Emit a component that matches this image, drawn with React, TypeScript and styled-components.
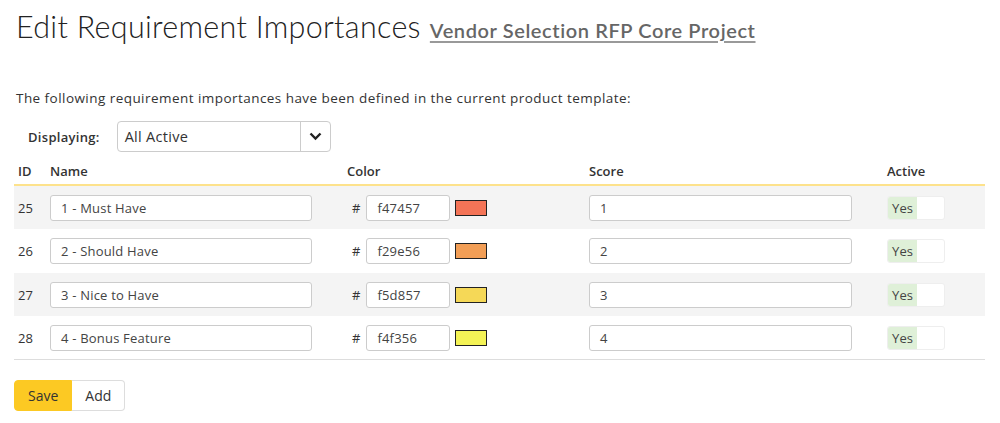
import React from "react";
import styled, { createGlobalStyle } from "styled-components";

const Global = createGlobalStyle`
  html, body { margin: 0; padding: 0; background: #fff; }
  body { font-family: "Open Sans", "Noto Sans", sans-serif; color: #333; }
  * { box-sizing: border-box; }
`;

const Page = styled.div`
  padding: 0 15px 0 14px;
  width: 1000px;
`;

const TitleRow = styled.div`
  display: flex;
  align-items: baseline;
  gap: 9px;
  padding: 8px 0 0 2px;
  height: 56px;
`;

const Title = styled.h1`
  margin: 0;
  font-family: "Lato", sans-serif;
  font-weight: 300;
  font-size: 30.5px;
  color: #222;
  letter-spacing: 0.3px;
`;

const ProjectLink = styled.a`
  font-family: "Lato", sans-serif;
  font-weight: 600;
  font-size: 20px;
  color: #666;
  text-decoration: underline;
  text-decoration-color: #999;
  text-underline-offset: 3px;
  letter-spacing: 0.6px;
`;

const Intro = styled.p`
  margin: 33px 0 0 2px;
  font-size: 13.5px;
  line-height: 18px;
  letter-spacing: 0.45px;
`;

const FilterRow = styled.div`
  display: flex;
  align-items: center;
  gap: 17px;
  margin: 14px 0 0 14px;
`;

const FilterLabel = styled.span`
  font-size: 13px;
  font-weight: 600;
  color: #333;
  letter-spacing: 0.3px;
`;

const Select = styled.div`
  display: flex;
  width: 214px;
  height: 31px;
  border: 1px solid #ccc;
  border-radius: 4px;
  background: #fff;
`;

const SelectValue = styled.div`
  flex: 1;
  display: flex;
  align-items: center;
  padding-left: 7px;
  font-size: 14.5px;
  letter-spacing: 0.3px;
  color: #333;
`;

const SelectButton = styled.div`
  width: 30px;
  border-left: 1px solid #ccc;
  display: flex;
  align-items: center;
  justify-content: center;
`;

const Grid = styled.div`
  margin-top: 6px;
  width: 971px;
`;

const cols = "32px 297px 242px 298px 1fr";

const HeadRow = styled.div`
  display: grid;
  grid-template-columns: ${cols};
  height: 28px;
  align-items: center;
  border-bottom: 2px solid #fde28c;
`;

const HeadCell = styled.div`
  padding-left: 4px;
  font-size: 13px;
  font-weight: 600;
  color: #333;
`;

const Row = styled.div<{ $alt: boolean }>`
  display: grid;
  grid-template-columns: ${cols};
  height: ${(p) => (p.$alt ? "43px" : "44px")};
  align-items: center;
  background: ${(p) => (p.$alt ? "#f4f4f4" : "#fff")};
  &:last-child { border-bottom: 1px solid #ddd; }
`;

const Cell = styled.div`
  padding-left: 4px;
  font-size: 13px;
  display: flex;
  align-items: center;
`;

const TextInput = styled.div<{ $w: number }>`
  width: ${(p) => p.$w}px;
  height: 26px;
  border: 1px solid #ccc;
  border-radius: 3px;
  background: #fff;
  display: flex;
  align-items: center;
  padding-left: 10px;
  font-size: 13px;
  letter-spacing: 0.2px;
  color: #444;
`;

const Hash = styled.span`
  margin: 0 6px 0 5px;
  font-size: 13px;
  color: #333;
`;

const Swatch = styled.span<{ $c: string }>`
  display: inline-block;
  width: 32px;
  height: 16px;
  margin-left: 5px;
  background: ${(p) => p.$c};
  border: 1px solid #222;
`;

const Toggle = styled.div`
  display: flex;
  width: 58px;
  height: 24px;
  border: 1px solid #eee;
  border-radius: 3px;
  overflow: hidden;
  background: #fff;
`;

const ToggleOn = styled.span`
  width: 29px;
  background: #dff0d8;
  display: flex;
  align-items: center;
  justify-content: center;
  font-size: 13px;
  color: #444;
`;

const Buttons = styled.div`
  display: flex;
  margin-top: 20px;
`;

const Btn = styled.button<{ $primary?: boolean }>`
  height: 31px;
  padding: 0 13px;
  font-family: "Open Sans", sans-serif;
  font-size: 14px;
  color: #333;
  background: ${(p) => (p.$primary ? "#fcc923" : "#fff")};
  border: 1px solid ${(p) => (p.$primary ? "#fcc923" : "#ddd")};
  border-radius: ${(p) => (p.$primary ? "4px 0 0 4px" : "0 4px 4px 0")};
  border-left-width: ${(p) => (p.$primary ? "1px" : "0")};
`;

const rows = [
  { id: 25, name: "1 - Must Have", color: "f47457", score: 1 },
  { id: 26, name: "2 - Should Have", color: "f29e56", score: 2 },
  { id: 27, name: "3 - Nice to Have", color: "f5d857", score: 3 },
  { id: 28, name: "4 - Bonus Feature", color: "f4f356", score: 4 },
];

export default function App() {
  return (
    <Page>
      <Global />
      <TitleRow>
        <Title>Edit Requirement Importances</Title>
        <ProjectLink href="#">Vendor Selection RFP Core Project</ProjectLink>
      </TitleRow>
      <Intro>The following requirement importances have been defined in the current product template:</Intro>
      <FilterRow>
        <FilterLabel>Displaying:</FilterLabel>
        <Select>
          <SelectValue>All Active</SelectValue>
          <SelectButton>
            <svg width="13" height="9" viewBox="0 0 13 9">
              <path d="M1.5 1.5 L6.5 6.5 L11.5 1.5" fill="none" stroke="#222" strokeWidth="2.4" />
            </svg>
          </SelectButton>
        </Select>
      </FilterRow>
      <Grid>
        <HeadRow>
          <HeadCell>ID</HeadCell>
          <HeadCell>Name</HeadCell>
          <HeadCell>Color</HeadCell>
          <HeadCell>Score</HeadCell>
          <HeadCell>Active</HeadCell>
        </HeadRow>
        {rows.map((r, i) => (
          <Row key={r.id} $alt={i % 2 === 0}>
            <Cell>{r.id}</Cell>
            <Cell>
              <TextInput $w={262}>{r.name}</TextInput>
            </Cell>
            <Cell>
              <Hash>#</Hash>
              <TextInput $w={84}>{r.color}</TextInput>
              <Swatch $c={"#" + r.color} />
            </Cell>
            <Cell>
              <TextInput $w={263}>{r.score}</TextInput>
            </Cell>
            <Cell>
              <Toggle>
                <ToggleOn>Yes</ToggleOn>
              </Toggle>
            </Cell>
          </Row>
        ))}
      </Grid>
      <Buttons>
        <Btn $primary>Save</Btn>
        <Btn>Add</Btn>
      </Buttons>
    </Page>
  );
}
